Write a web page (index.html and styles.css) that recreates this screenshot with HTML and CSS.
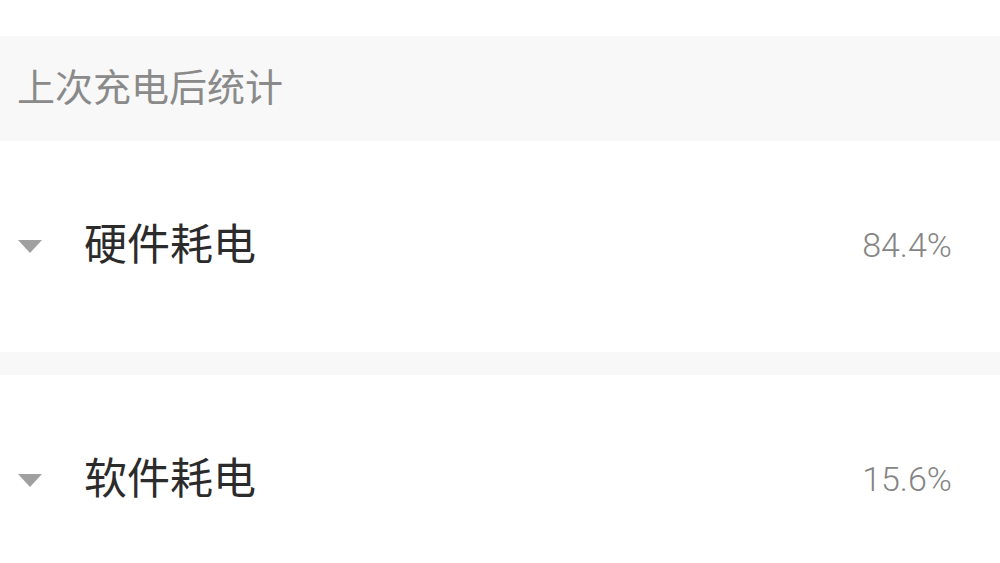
FILE: index.html
```html
<!DOCTYPE html>
<html lang="zh-CN">
<head>
    <meta charset="UTF-8">
    <title>电池用量</title>
    <link rel="stylesheet" href="styles.css">
</head>
<body>
<div class="top-space"></div>

<section class="group-title">上次充电后统计</section>

<div class="usage-row">
    <span class="arrow"></span>
    <span class="usage-name">硬件耗电</span>
    <span class="usage-value">84.4%</span>
</div>

<div class="divider"></div>

<div class="usage-row">
    <span class="arrow"></span>
    <span class="usage-name">软件耗电</span>
    <span class="usage-value">15.6%</span>
</div>
</body>
</html>
```

FILE: styles.css
```css
body {
    margin: 0;
    background: #ffffff;
    font-family: Roboto, "Noto Sans CJK SC", sans-serif;
    overflow: hidden;
}

.top-space {
    height: 36px;
}

.group-title {
    height: 105px;
    box-sizing: border-box;
    padding: 0 0 8px 17px;
    background: #f8f8f8;
    color: #8a8a8a;
    font-size: 38px;
    display: flex;
    align-items: center;
}

.usage-row {
    height: 211px;
    display: flex;
    align-items: center;
    padding: 0 48px 0 18px;
}

.arrow {
    width: 0;
    height: 0;
    border-left: 12.5px solid transparent;
    border-right: 12.5px solid transparent;
    border-top: 13px solid #a0a0a0;
    margin-right: 42px;
}

.usage-name {
    flex: 1;
    font-size: 43px;
    color: #2b2b2b;
    margin-top: -12px;
}

.usage-value {
    font-size: 34px;
    font-weight: 300;
    color: #858585;
    margin-top: -4px;
}

.divider {
    height: 23px;
    background: #f8f8f8;
}
```
